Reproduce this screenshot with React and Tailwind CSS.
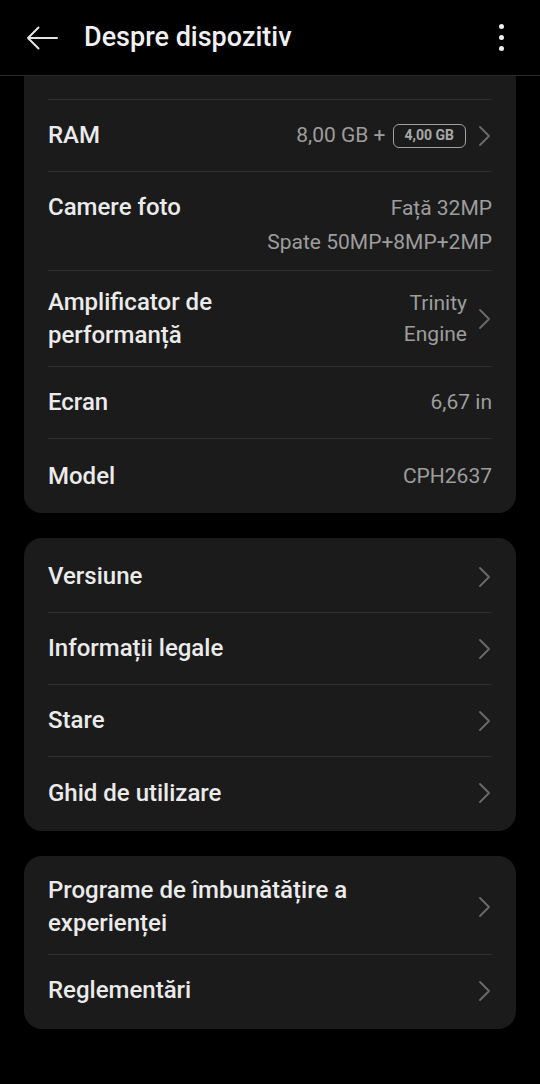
import React from 'react';

const Chevron = () => (
    <svg width="14" height="22" viewBox="0 0 14 22" fill="none" className="shrink-0">
        <polyline points="2,2 11,11 2,20" stroke="#6b6b6b" strokeWidth="1.8" strokeLinecap="round" strokeLinejoin="round" />
    </svg>
);

const Row = ({ children, last, className = '' }) => (
    <div className={`flex items-center justify-between ${last ? '' : 'border-b border-[#303030]'} ${className}`}>
        {children}
    </div>
);

const Label = ({ children }) => (
    <div className="text-[24px] font-medium text-[#ebebeb] leading-[33px]">{children}</div>
);

const Value = ({ children, className = '' }) => (
    <div className={`text-[21px] text-[#9d9d9d] leading-[31px] text-right ${className}`}>{children}</div>
);

const App = () => {
    return (
        <div className="w-[540px] h-[1084px] bg-black overflow-hidden" style={{ fontFamily: 'Roboto, "Noto Sans", sans-serif' }}>
            {/* top bar */}
            <header className="h-[76px] flex items-center border-b border-[#2a2a2a] pl-[26px] pr-[36px]">
                <svg width="32" height="24" viewBox="0 0 32 24" fill="none">
                    <path d="M31 12H2M12.5 1.5L2 12l10.5 10.5" stroke="#e4e4e4" strokeWidth="2" strokeLinecap="round" strokeLinejoin="round" />
                </svg>
                <h1 className="ml-[26px] text-[27px] font-medium text-[#f0f0f0]">Despre dispozitiv</h1>
                <div className="ml-auto flex flex-col gap-[6px]">
                    <span className="w-[5px] h-[5px] rounded-full bg-[#eeeeee]" />
                    <span className="w-[5px] h-[5px] rounded-full bg-[#eeeeee]" />
                    <span className="w-[5px] h-[5px] rounded-full bg-[#eeeeee]" />
                </div>
            </header>

            <div className="px-[24px]">
                {/* card 1 – scrolled, top cut by header */}
                <section className="bg-[#1b1b1b] rounded-b-[18px] px-[24px]">
                    <div className="h-[24px] border-b border-[#303030]" />
                    <Row className="h-[72px]">
                        <Label>RAM</Label>
                        <div className="flex items-center">
                            <span className="text-[21px] text-[#9d9d9d]">8,00 GB +</span>
                            <span className="ml-[7px] h-[24px] px-[11px] flex items-center rounded-[6px] border-[1.5px] border-[#a0a0a0] text-[14px] font-bold text-[#a8a8a8]">4,00 GB</span>
                            <span className="ml-[12px]"><Chevron /></span>
                        </div>
                    </Row>
                    <Row className="h-[99px] items-start pt-[19px]">
                        <Label>Camere foto</Label>
                        <div>
                            <Value className="leading-[34px]">Față 32MP</Value>
                            <Value className="leading-[34px]">Spate 50MP+8MP+2MP</Value>
                        </div>
                    </Row>
                    <Row className="h-[96px]">
                        <Label>Amplificator de<br />performanță</Label>
                        <div className="flex items-center">
                            <Value>Trinity<br />Engine</Value>
                            <span className="ml-[11px]"><Chevron /></span>
                        </div>
                    </Row>
                    <Row className="h-[72px]">
                        <Label>Ecran</Label>
                        <Value>6,67 in</Value>
                    </Row>
                    <Row className="h-[74px]" last>
                        <Label>Model</Label>
                        <Value>CPH2637</Value>
                    </Row>
                </section>

                {/* card 2 */}
                <section className="mt-[25px] bg-[#1b1b1b] rounded-[18px] px-[24px] pt-[3px] pb-[2px]">
                    {['Versiune', 'Informații legale', 'Stare', 'Ghid de utilizare'].map((t, i, a) => (
                        <Row key={t} className="h-[72px]" last={i === a.length - 1}>
                            <Label>{t}</Label>
                            <Chevron />
                        </Row>
                    ))}
                </section>

                {/* card 3 */}
                <section className="mt-[25px] bg-[#1b1b1b] rounded-[18px] px-[24px] pt-[3px] pb-[3px]">
                    <Row className="h-[96px]">
                        <Label>Programe de îmbunătățire a<br />experienței</Label>
                        <Chevron />
                    </Row>
                    <Row className="h-[71px]" last>
                        <Label>Reglementări</Label>
                        <Chevron />
                    </Row>
                </section>
            </div>
        </div>
    );
};

export default App;
